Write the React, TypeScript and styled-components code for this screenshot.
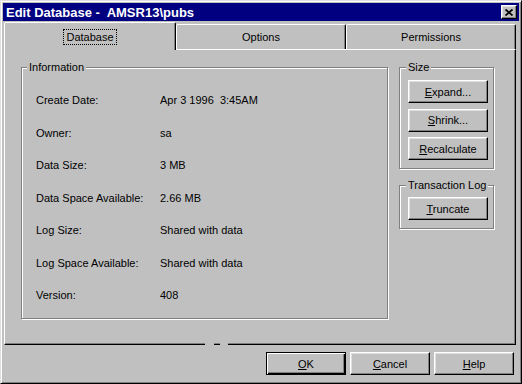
import { Fragment } from 'react';
import styled, { createGlobalStyle } from 'styled-components';

const GlobalStyle = createGlobalStyle`
  body {
    margin: 0;
    background: #c0c0c0;
  }
  * {
    box-sizing: border-box;
  }
`;

const Window = styled.div`
  width: 522px;
  height: 384px;
  display: flex;
  flex-direction: column;
  padding: 2px;
  background: #c0c0c0;
  border: 1px solid;
  border-color: #dfdfdf #000 #000 #dfdfdf;
  box-shadow: inset 1px 1px #fff, inset -1px -1px #808080;
  font-family: 'Liberation Sans', Arial, sans-serif;
  font-size: 11px;
  color: #000;
`;

const TitleBar = styled.div`
  flex: none;
  height: 18px;
  display: flex;
  align-items: center;
  justify-content: space-between;
  padding: 0 2px 0 3px;
  background: #000080;
  color: #fff;
  font-weight: bold;
  font-size: 13px;
  white-space: pre;
`;

const CloseButton = styled.div`
  width: 16px;
  height: 14px;
  display: flex;
  align-items: center;
  justify-content: center;
  background: #c0c0c0;
  border: 1px solid;
  border-color: #fff #000 #000 #fff;
  box-shadow: inset -1px -1px #808080, inset 1px 1px #dfdfdf;
`;

const TabStrip = styled.div`
  flex: none;
  height: 27px;
  margin-top: 1px;
  padding-left: 1px;
  display: flex;
  align-items: flex-end;
`;

const Tab = styled.div<{ $active?: boolean }>`
  width: ${(p) => (p.$active ? 172 : 170)}px;
  height: ${(p) => (p.$active ? 28 : 25)}px;
  margin-bottom: ${(p) => (p.$active ? -1 : 0)}px;
  position: relative;
  z-index: ${(p) => (p.$active ? 1 : 0)};
  display: flex;
  align-items: center;
  justify-content: center;
  background: #c0c0c0;
  border: 1px solid;
  border-bottom: none;
  border-color: #fff #000 transparent #fff;
  border-radius: 2px 2px 0 0;
  box-shadow: inset -1px 0 #808080;
`;

const FocusLabel = styled.span<{ $focused?: boolean }>`
  padding: 1px 2px;
  border: 1px dotted ${(p) => (p.$focused ? '#000' : 'transparent')};
`;

const Panel = styled.div`
  flex: none;
  height: 296px;
  margin: 0 3px 0 1px;
  position: relative;
  display: flex;
  gap: 11px;
  padding: 11px 0 0 16px;
  border: 1px solid;
  border-color: #fff #000 #000 #fff;
  box-shadow: inset -1px -1px #808080;
`;

const EdgeGap = styled.div<{ $left: number; $width: number }>`
  position: absolute;
  left: ${(p) => p.$left}px;
  width: ${(p) => p.$width}px;
  bottom: -1px;
  height: 2px;
  background: #c0c0c0;
`;

const Group = styled.fieldset<{ $width: number; $height: number }>`
  width: ${(p) => p.$width}px;
  height: ${(p) => p.$height}px;
  margin: 0;
  padding: 0;
  border: 1px solid #808080;
  box-shadow: inset 1px 1px #fff, 1px 1px #fff;
`;

const Legend = styled.legend<{ $indent: number }>`
  margin-left: ${(p) => p.$indent}px;
  padding: 0 2px;
  line-height: 13px;
  background: #c0c0c0;
`;

const InfoGrid = styled.div`
  display: grid;
  grid-template-columns: 124px 1fr;
  grid-auto-rows: 32.5px;
  align-items: center;
  padding: 10px 0 0 14px;
  white-space: pre;
`;

const SideColumn = styled.div`
  display: flex;
  flex-direction: column;
  gap: 10px;
`;

const ButtonStack = styled.div<{ $top: number }>`
  display: flex;
  flex-direction: column;
  gap: 5.5px;
  padding: ${(p) => p.$top}px 0 0 8px;
`;

const Button = styled.div<{ $default?: boolean }>`
  width: 80px;
  height: 23px;
  display: flex;
  align-items: center;
  justify-content: center;
  background: #c0c0c0;
  border: 1px solid;
  border-color: ${(p) => (p.$default ? '#000' : '#fff #000 #000 #fff')};
  box-shadow: ${(p) =>
    p.$default
      ? 'inset 1px 1px #fff, inset -1px -1px #000, inset -2px -2px #808080'
      : 'inset -1px -1px #808080, inset 1px 1px #dfdfdf'};
`;

const Footer = styled.div`
  flex: 1;
  display: flex;
  justify-content: flex-end;
  align-items: flex-start;
  gap: 4px;
  padding: 7px 5px 0 0;
`;

const rows: [string, string][] = [
  ['Create Date:', 'Apr 3 1996  3:45AM'],
  ['Owner:', 'sa'],
  ['Data Size:', '3 MB'],
  ['Data Space Available:', '2.66 MB'],
  ['Log Size:', 'Shared with data'],
  ['Log Space Available:', 'Shared with data'],
  ['Version:', '408'],
];

const CloseIcon = () => (
  <svg width="8" height="7" viewBox="0 0 8 7">
    <path d="M0.5 0.5 L7.5 6.5 M7.5 0.5 L0.5 6.5" stroke="#000" strokeWidth="1.8" />
  </svg>
);

export default function App() {
  return (
    <>
      <GlobalStyle />
      <Window>
        <TitleBar>
          <span>Edit Database -  AMSR13\pubs</span>
          <CloseButton>
            <CloseIcon />
          </CloseButton>
        </TitleBar>
        <TabStrip>
          <Tab $active>
            <FocusLabel $focused>Database</FocusLabel>
          </Tab>
          <Tab>
            <FocusLabel>Options</FocusLabel>
          </Tab>
          <Tab>
            <FocusLabel>Permissions</FocusLabel>
          </Tab>
        </TabStrip>
        <Panel>
          <Group $width={367} $height={258}>
            <Legend $indent={5}>Information</Legend>
            <InfoGrid>
              {rows.map(([label, value]) => (
                <Fragment key={label}>
                  <span>{label}</span>
                  <span>{value}</span>
                </Fragment>
              ))}
            </InfoGrid>
          </Group>
          <SideColumn>
            <Group $width={95} $height={108}>
              <Legend $indent={6}>Size</Legend>
              <ButtonStack $top={6}>
                <Button>
                  <span><u>E</u>xpand...</span>
                </Button>
                <Button>
                  <span><u>S</u>hrink...</span>
                </Button>
                <Button>
                  <span><u>R</u>ecalculate</span>
                </Button>
              </ButtonStack>
            </Group>
            <Group $width={95} $height={50}>
              <Legend $indent={6}>Transaction Log</Legend>
              <ButtonStack $top={5}>
                <Button>
                  <span><u>T</u>runcate</span>
                </Button>
              </ButtonStack>
            </Group>
          </SideColumn>
          <EdgeGap $left={200} $width={9} />
          <EdgeGap $left={215} $width={8} />
        </Panel>
        <Footer>
          <Button $default>
            <span><u>O</u>K</span>
          </Button>
          <Button>
            <span><u>C</u>ancel</span>
          </Button>
          <Button>
            <span><u>H</u>elp</span>
          </Button>
        </Footer>
      </Window>
    </>
  );
}
